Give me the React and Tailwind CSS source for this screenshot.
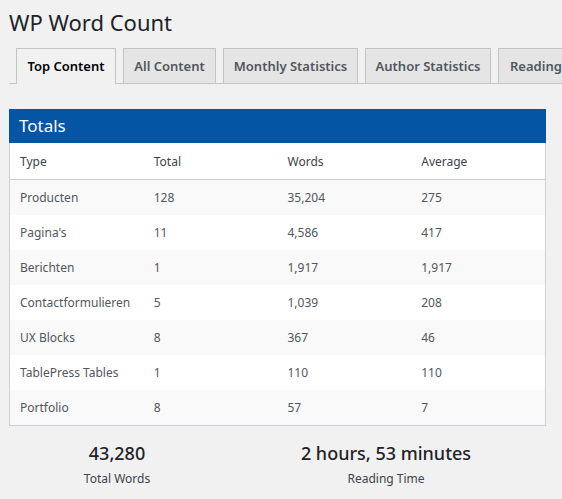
import React from "react";

const rows = [
  ["Producten", "128", "35,204", "275"],
  ["Pagina's", "11", "4,586", "417"],
  ["Berichten", "1", "1,917", "1,917"],
  ["Contactformulieren", "5", "1,039", "208"],
  ["UX Blocks", "8", "367", "46"],
  ["TablePress Tables", "1", "110", "110"],
  ["Portfolio", "8", "57", "7"],
];

export default function App() {
  return (
    <div
      className="w-[562px] h-[499px] overflow-hidden bg-[#f1f1f1] text-[#3c434a]"
      style={{ fontFamily: '"Noto Sans", "Open Sans", sans-serif' }}
    >
      <h1 className="pl-[9px] pt-[6px] h-[48px] text-[22px] leading-[32px] text-[#1d2327] font-normal">
        WP Word Count
      </h1>
      <div className="flex items-end h-[36px] pl-[7px] gap-[7px] border-b border-[#c3c4c7] ml-[9px] whitespace-nowrap">
        <div className="shrink-0 h-[36px] w-[100px] -mb-px flex items-center justify-center pt-[1px] bg-[#f1f1f1] border border-b-0 border-[#c3c4c7] text-[13px] font-semibold text-black">
          Top Content
        </div>
        <div className="shrink-0 h-[35px] w-[93px] flex items-center justify-center pt-[1px] bg-[#e5e5e5] border border-b-0 border-[#c3c4c7] text-[13px] font-semibold text-[#50575e]">
          All Content
        </div>
        <div className="shrink-0 h-[35px] w-[135px] flex items-center justify-center pt-[1px] bg-[#e5e5e5] border border-b-0 border-[#c3c4c7] text-[13px] font-semibold text-[#50575e]">
          Monthly Statistics
        </div>
        <div className="shrink-0 h-[35px] w-[126px] flex items-center justify-center pt-[1px] bg-[#e5e5e5] border border-b-0 border-[#c3c4c7] text-[13px] font-semibold text-[#50575e]">
          Author Statistics
        </div>
        <div className="shrink-0 h-[35px] w-[110px] flex items-center pl-[11px] pt-[1px] bg-[#e5e5e5] border border-b-0 border-[#c3c4c7] text-[13px] font-semibold text-[#50575e]">
          Reading Time
        </div>
      </div>
      <div className="ml-[9px] mt-[25px] w-[537px]">
        <div className="h-[34px] bg-[#0455a4] text-white text-[17px] leading-[34px] pl-[10px]">
          Totals
        </div>
        <div className="bg-white border border-t-0 border-[#ccd0d4] text-[12px]">
          <div className="grid grid-cols-4 h-[37px] items-center border-b border-[#ccd0d4] text-[#3c434a]">
            <div className="pl-[10px] pt-[1px]">Type</div>
            <div className="pl-[10px] pt-[1px]">Total</div>
            <div className="pl-[10px] pt-[1px]">Words</div>
            <div className="pl-[10px] pt-[1px]">Average</div>
          </div>
          {rows.map((r, i) => (
            <div
              key={i}
              className={`grid grid-cols-4 h-[35px] items-center text-[#50575e] ${
                i % 2 === 0 ? "bg-[#f9f9f9]" : "bg-white"
              }`}
            >
              {r.map((c, j) => (
                <div key={j} className="pl-[10px] whitespace-nowrap">
                  {c}
                </div>
              ))}
            </div>
          ))}
        </div>
      </div>
      <div className="flex mt-[12px] text-[#1d2327]">
        <div className="ml-[9px] w-[216px] text-center">
          <div className="text-[18px] leading-[30px] font-medium">43,280</div>
          <div className="text-[12px] leading-[20px] mt-[1px] text-[#3c434a]">Total Words</div>
        </div>
        <div className="ml-[53px] w-[216px] text-center">
          <div className="text-[18px] leading-[30px] font-medium whitespace-nowrap">2 hours, 53 minutes</div>
          <div className="text-[12px] leading-[20px] mt-[1px] text-[#3c434a]">Reading Time</div>
        </div>
      </div>
    </div>
  );
}
